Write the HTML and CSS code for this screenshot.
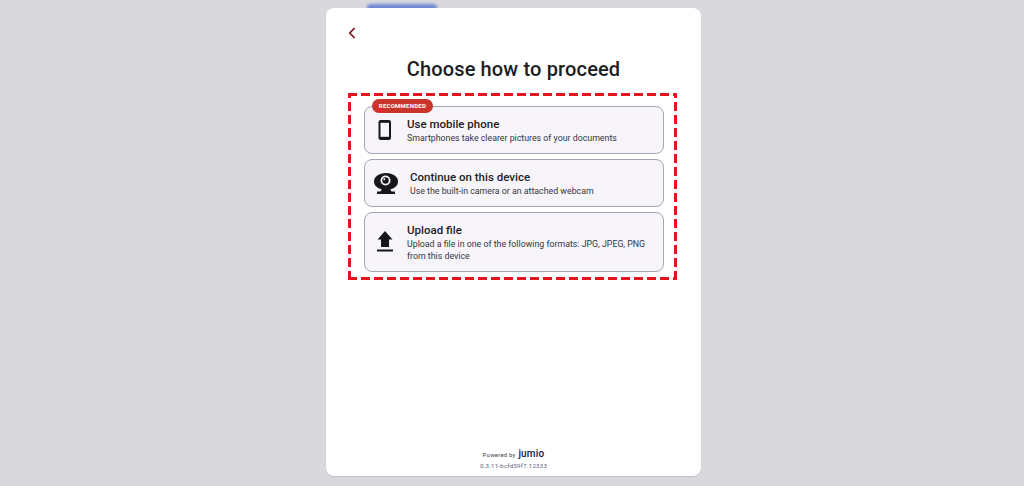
FILE: index.html
```html
<!DOCTYPE html>
<html lang="en">
<head>
<meta charset="utf-8">
<title>Choose how to proceed</title>
<link rel="stylesheet" href="styles.css">
</head>
<body>
<div class="glow"></div>
<main class="panel">
  <header class="top">
    <svg class="back" width="8" height="12" viewBox="0 0 8 12"><path d="M6.600 1 1.800 6l4.800 5" fill="none" stroke="#7d1a22" stroke-width="1.800"/></svg>
  </header>
  <h1 class="title">Choose how to proceed</h1>
  <section class="dashed">
    <div class="option">
      <span class="badge">RECOMMENDED</span>
      <svg class="icon phone" width="14" height="20" viewBox="0 0 14 20"><rect x="0.500" y="0" width="12.500" height="20" rx="2.200" fill="#15171c"/><rect x="2.500" y="2.800" width="8.500" height="14" fill="#f7f5f9"/></svg>
      <div class="text">
        <div class="name">Use mobile phone</div>
        <div class="desc">Smartphones take clearer pictures of your documents</div>
      </div>
    </div>
    <div class="option">
      <svg class="icon cam" width="24" height="21" viewBox="0 0 24 21"><path d="M12 0C5 0 0 3.600 0 8.500S5 17 12 17s12-3.600 12-8.500S19 0 12 0Z" fill="#15171c"/><circle cx="11.500" cy="7.500" r="5" fill="#f7f5f9"/><circle cx="11.500" cy="7.500" r="3.200" fill="#15171c"/><circle cx="10.300" cy="6.300" r="1" fill="#f7f5f9"/><path d="M8 16h8l1.500 2.500H21V21H3v-2.500h3.500Z" fill="#15171c"/></svg>
      <div class="text">
        <div class="name">Continue on this device</div>
        <div class="desc">Use the built-in camera or an attached webcam</div>
      </div>
    </div>
    <div class="option tall">
      <svg class="icon up" width="16" height="21" viewBox="0 0 16 21"><path d="M8 0 15.500 8.500H12V16H4V8.500H.5Z" fill="#15171c"/><rect x="0" y="18.500" width="16" height="2" fill="#15171c"/></svg>
      <div class="text">
        <div class="name">Upload file</div>
        <div class="desc">Upload a file in one of the following formats: JPG, JPEG, PNG<br>from this device</div>
      </div>
    </div>
  </section>
  <footer class="foot">
    <div class="powered"><span>Powered by</span> <b class="logo">jumio</b></div>
    <div class="ver">0.3.11-bcfd59f7.12333</div>
  </footer>
</main>
</body>
</html>
```
FILE: styles.css
```css
* { box-sizing: border-box; }
html, body { margin: 0; height: 100%; }
body {
  background: #d9d8dd;
  font-family: Roboto, "Liberation Sans", sans-serif;
  color: #1b1d24;
  display: flex;
  justify-content: center;
  align-items: flex-start;
  padding-top: 8px;
  overflow: hidden;
  position: relative;
}
.glow {
  position: absolute;
  left: 367px;
  top: 4px;
  width: 70px;
  height: 8px;
  border-radius: 5px;
  background: #6f88d4;
  filter: blur(1.500px);
}
.panel {
  position: relative;
  width: 375px;
  height: 468px;
  background: #fff;
  border-radius: 8px;
  box-shadow: 0 1px 1px rgba(0,0,0,.12);
  display: flex;
  flex-direction: column;
  margin-left: 3px;
}
.top { height: 32px; padding: 19px 0 0 22px; line-height: 0; }
.back { display: block; }
.title {
  margin: 17px 0 0;
  font-size: 20px;
  line-height: 24px;
  font-weight: 500;
  letter-spacing: .15px;
  text-align: center;
}
.dashed {
  margin: 12px 24px 0 22px;
  height: 187px;
  padding: 13px 13px 0 16px;
  display: flex;
  flex-direction: column;
  gap: 5px;
  background:
    repeating-linear-gradient(90deg, #e4141f 0 9px, transparent 9px 13px) top / 100% 3px no-repeat,
    repeating-linear-gradient(90deg, #e4141f 0 9px, transparent 9px 13px) bottom / 100% 3px no-repeat,
    repeating-linear-gradient(0deg, #e4141f 0 9px, transparent 9px 13px) left / 3px 100% no-repeat,
    repeating-linear-gradient(0deg, #e4141f 0 9px, transparent 9px 13px) right / 3px 100% no-repeat;
}
.option {
  position: relative;
  height: 48px;
  background: #f7f5f9;
  border: 1px solid #a3a5b3;
  border-radius: 8px;
  display: flex;
  align-items: center;
  padding-left: 13px;
  flex: none;
}
.tall { height: 60px; }
.icon { flex: none; }
.phone { margin-right: 15px; }
.cam { margin: 0 12px 0 -4px; }
.up { margin: -2px 14px 0 -1px; }
.name { font-size: 11.500px; line-height: 14px; font-weight: 500; }
.desc { font-size: 8.800px; line-height: 12px; color: #33353f; margin-top: 1px; }
.tall .name { position: relative; top: 1px; }
.tall .desc { margin-top: 2px; }
.badge {
  position: absolute;
  left: 7px;
  top: -8px;
  height: 14px;
  width: 61px;
  border-radius: 7px;
  background: #c9352b;
  color: #fff;
  font-size: 6px;
  line-height: 14px;
  font-weight: 700;
  text-align: center;
  letter-spacing: .25px;
}
.foot { margin-top: auto; padding-bottom: 5px; text-align: center; }
.powered { font-size: 6px; line-height: 10px; color: #3d3f4a; letter-spacing: .2px; }
.logo { font-size: 10px; color: #10204a; font-weight: 500; margin-left: 1px; }
.ver { font-size: 6px; line-height: 10px; color: #5a6079; letter-spacing: .3px; margin-top: 1px; }
```
